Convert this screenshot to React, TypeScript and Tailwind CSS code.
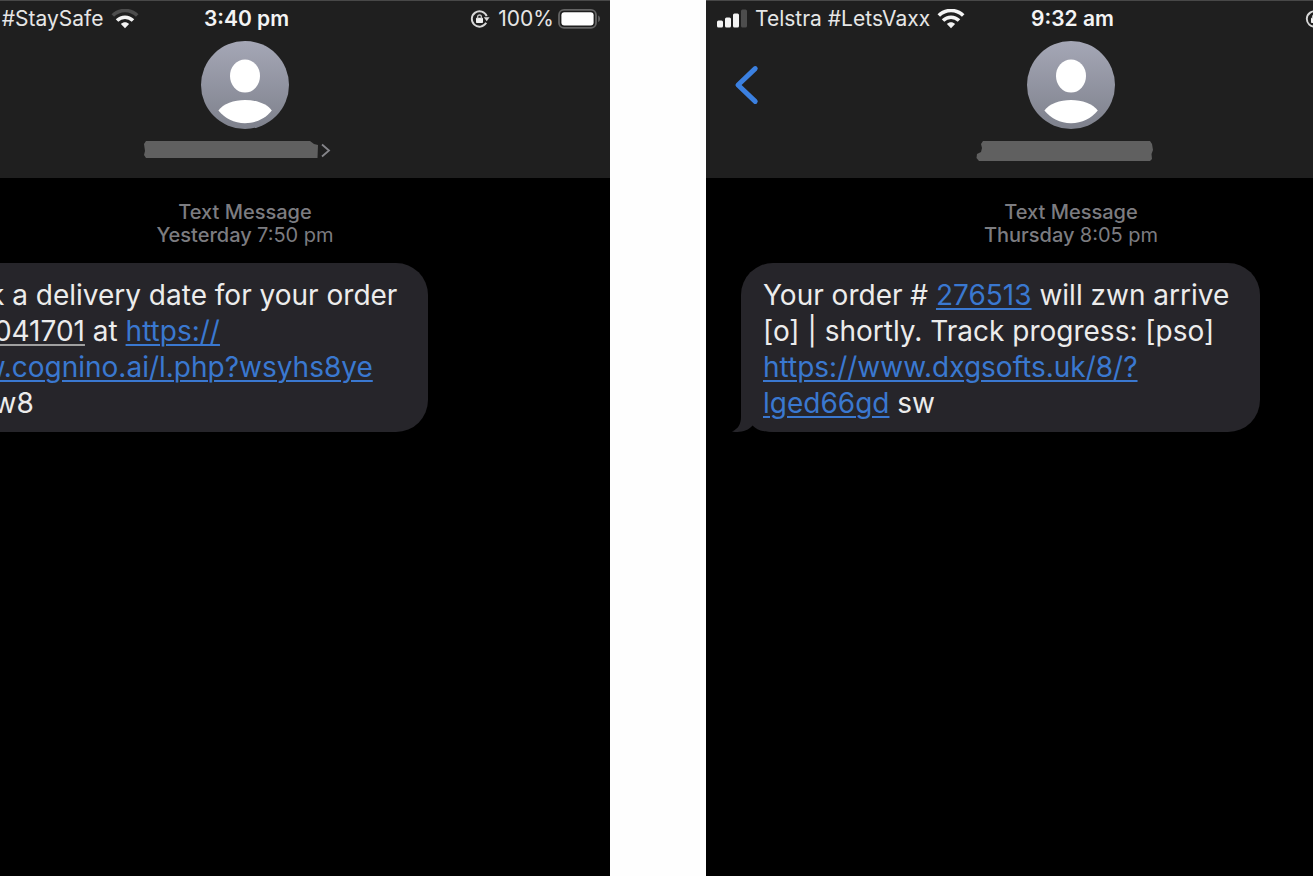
import type { ReactNode } from "react";

type StatusProps = {
  carrier: string;
  signal: number;
  wifi: number;
  time: string;
  battery: string;
};

type PhoneProps = {
  status: StatusProps;
  name: ReactNode;
  day: string;
  hour: string;
  children: ReactNode;
};

function SignalIcon({ level }: { level: number }) {
  const bars = [7, 10, 14, 18];

  return (
    <svg width="31" height="20" viewBox="0 0 31 20" aria-hidden="true">
      {bars.map((h, i) => (
        <rect
          key={h}
          x={i * 8}
          y={18.5 - h}
          width="6"
          height={h}
          rx="1.5"
          fill={i < level ? "#f4f4f4" : "#4d4d4d"}
        />
      ))}
    </svg>
  );
}

function WifiIcon({ level }: { level: number }) {
  return (
    <svg width="28" height="20" viewBox="0 0 28 20" aria-hidden="true" fill="none">
      <path
        d="M1.8 6.6C8.6 -0.2 19.4 -0.2 26.2 6.6"
        stroke={level > 2 ? "#f4f4f4" : "#4d4d4d"}
        strokeWidth="3.6"
      />
      <path d="M6 11.5C10.6 7.1 17.4 7.1 22 11.5" stroke="#f4f4f4" strokeWidth="3.6" />
      <path d="M9.900 15C12.300 12.600 15.700 12.600 18.100 15L14 19.300Z" fill="#f4f4f4" />
    </svg>
  );
}

function LockIcon() {
  return (
    <svg width="20" height="20" viewBox="0 0 20 20" aria-hidden="true" fill="none">
      <path
        d="M16.2 13.8A7.7 7.7 0 1 1 16.7 7.2"
        stroke="#d8d8d8"
        strokeWidth="1.9"
      />
      <path d="M13.8 8.2H19.6L16.7 12.2Z" fill="#d8d8d8" />
      <rect x="6" y="8.8" width="7" height="5.2" rx="0.8" fill="#f0f0f0" />
      <path d="M7.6 9.4V7.9A1.9 1.9 0 0 1 11.4 7.9V9.4" stroke="#c4c4c4" strokeWidth="1.3" />
    </svg>
  );
}

function BatteryIcon() {
  return (
    <svg width="44" height="20" viewBox="0 0 44 20" aria-hidden="true">
      <rect x="1" y="0.900" width="37" height="18" rx="5" fill="none" stroke="#646464" strokeWidth="1.8" />
      <rect x="3.4" y="3.2" width="32.200" height="13.4" rx="3" fill="#ffffff" />
      <path d="M40.2 6.600V13C42.6 12.200 42.6 7.400 40.2 6.600Z" fill="#646464" />
    </svg>
  );
}

function Avatar() {
  return (
    <svg width="88" height="88" viewBox="0 0 88 88" role="img" aria-label="Contact">
      <defs>
        <linearGradient id="avatar" x1="0" y1="0" x2="0" y2="1">
          <stop offset="0" stopColor="#a5a7b6" />
          <stop offset="1" stopColor="#7e818c" />
        </linearGradient>
      </defs>
      <circle cx="44" cy="44" r="44" fill="url(#avatar)" />
      <ellipse cx="44" cy="35" rx="15" ry="16.5" fill="#ffffff" />
      <path
        d="M17.4 69.6C22 62.6 33 59 44 59S66 62.6 70.8 69.6C64.5 77.6 55 82.2 44 82.2S23.8 77.6 17.4 69.6Z"
        fill="#ffffff"
      />
    </svg>
  );
}

function StatusBar({ carrier, signal, wifi, time, battery }: StatusProps) {
  return (
    <div className="grid h-9 grid-cols-[1fr_auto_1fr] items-center pr-2 pl-[11px] text-[21px] text-[#e6e6e6]">
      <div className="flex items-center gap-[7px]">
        <SignalIcon level={signal} />
        <span>{carrier}</span>
        <WifiIcon level={wifi} />
      </div>
      <span className="font-semibold text-[#f4f4f4]">{time}</span>
      <div className="flex items-center justify-end">
        <LockIcon />
        <span className="mr-1 ml-2">{battery}</span>
        <BatteryIcon />
      </div>
    </div>
  );
}

function Phone({ status, name, day, hour, children }: PhoneProps) {
  return (
    <section className="w-[730px] shrink-0 whitespace-nowrap">
      <header className="h-[178px] border-t border-[#484848] bg-[#1f1f1f]">
        <StatusBar {...status} />
        <div className="mt-1 grid grid-cols-[1fr_auto_1fr] items-center">
          <button aria-label="Back" className="ml-7 w-7">
            <svg width="26" height="40" viewBox="0 0 26 40" fill="none" aria-hidden="true">
              <path
                d="M21.2 3.6L4 20L21.2 36.4"
                stroke="#3b80e0"
                strokeWidth="5"
                strokeLinecap="round"
                strokeLinejoin="round"
              />
            </svg>
          </button>
          <Avatar />
        </div>
        <div className="mt-[9px] flex justify-center">{name}</div>
      </header>

      <div className="pt-[23px] text-center text-xl leading-[23px] font-medium text-[#7c7c80]">
        <div>Text Message</div>
        <div>
          {day} <span className="font-normal">{hour}</span>
        </div>
      </div>

      {children}
    </section>
  );
}

function Bubble({ children }: { children: ReactNode }) {
  return (
    <div className="relative mt-4 ml-[35px] w-fit rounded-[32px] bg-[#26252a] pt-3.5 pr-[31px] pb-[11px] pl-[22px] text-[28px] leading-9 text-[#ececec]">
      <svg
        width="44"
        height="32"
        viewBox="0 0 44 32"
        className="absolute bottom-0 -left-2.5"
        aria-hidden="true"
      >
        <path d="M10 0V17C10 24 7 29 1 31.4C9 33 17 31 21.500 25.5C26 30 32 32 42 32V0Z" fill="#26252a" />
      </svg>
      <p className="relative">{children}</p>
    </div>
  );
}

function Link({ children }: { children: string }) {
  return (
    <a
      href="#"
      className="text-[#3a78d0] underline decoration-2 underline-offset-3"
    >
      {children}
    </a>
  );
}

export default function App() {
  return (
    <main className="grid min-h-screen grid-cols-[610fr_607fr] gap-24 bg-[#fefefe] font-['Inter',sans-serif]">
      <div className="flex justify-end overflow-hidden bg-black">
        <Phone
          status={{ carrier: "Telstra #StaySafe", signal: 3, wifi: 2, time: "3:40 pm", battery: "100%" }}
          day="Yesterday"
          hour="7:50 pm"
          name={
            <svg width="208" height="26" viewBox="0 0 208 26" aria-hidden="true">
              <path
                d="M5 3H169L173 6L177 7L176.500 20H5L3 17L4 13L3 6Z"
                fill="#606060"
              />
              <path d="M181 6.500L188 12.500L181 18.500" fill="none" stroke="#85858a" strokeWidth="1.800" />
            </svg>
          }
        >
          <Bubble>
            Book a delivery date for your order
            <br />
            <a href="#" className="underline decoration-[#a0a0a0] decoration-2 underline-offset-3">
              GB0041701
            </a>{" "}
            at <Link>https://</Link>
            <br />
            <Link>www.cognino.ai/l.php?wsyhs8ye</Link>
            <br />
            pso w8
          </Bubble>
        </Phone>
      </div>

      <div className="flex overflow-hidden bg-black">
        <Phone
          status={{ carrier: "Telstra #LetsVaxx", signal: 3, wifi: 3, time: "9:32 am", battery: "99%" }}
          day="Thursday"
          hour="8:05 pm"
          name={
            <svg width="208" height="26" viewBox="0 0 208 26" aria-hidden="true">
              <path
                d="M16 3H183L185 6L186 12L184.500 16L185 21L183 23H12L9.500 20L10 16L14 14L15 10L14 6Z"
                fill="#606060"
              />
            </svg>
          }
        >
          <Bubble>
            Your order # <Link>276513</Link> will zwn arrive
            <br />
            [o] | shortly. Track progress: [pso]
            <br />
            <Link>https://www.dxgsofts.uk/8/?</Link>
            <br />
            <Link>lged66gd</Link> sw
          </Bubble>
        </Phone>
      </div>
    </main>
  );
}
